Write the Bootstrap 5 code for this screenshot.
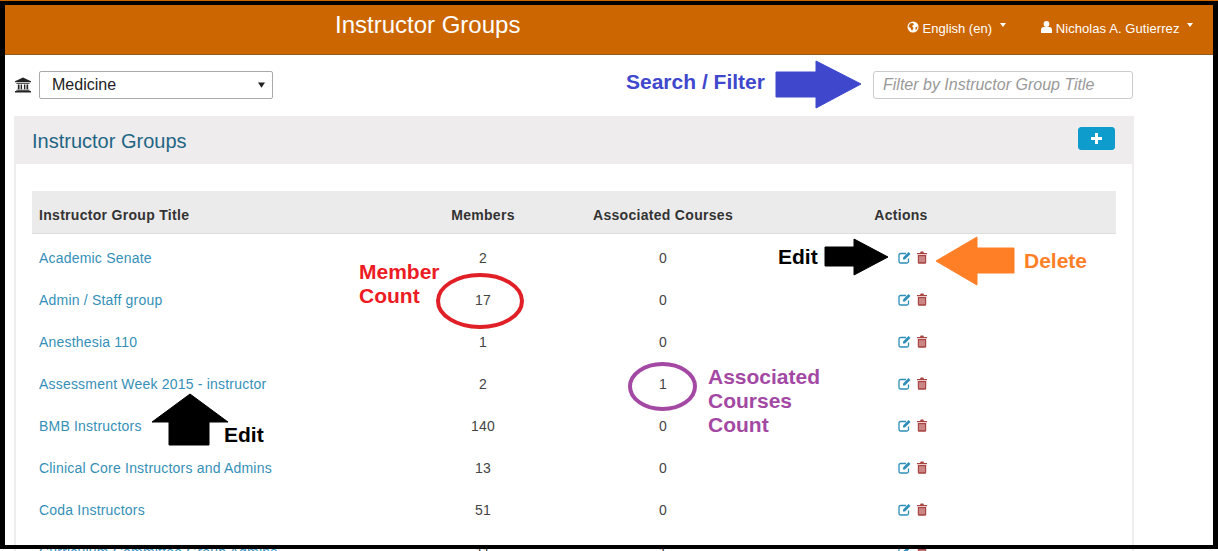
<!DOCTYPE html>
<html lang="en">
<head>
    <meta charset="UTF-8" />
    <title>Instructor Groups</title>
    <link rel="stylesheet" href="https://cdn.jsdelivr.net/npm/bootstrap@5.3.3/dist/css/bootstrap.min.css">
    <style>
        html, body { height: 551px; overflow: hidden; }
        body { font-family: "Liberation Sans", Arial, sans-serif; font-size: 14px; color: #333; background: #fff; }
        .page-wrap { position: relative; width: 1218px; height: 551px; overflow: hidden; }

        .top-bar { background: #cc6600; height: 55px; border-bottom: 1px solid #8f5a1e; padding: 5px 0 0 335px; color: #fff; }
        .top-title { font-size: 24px; line-height: 40px; margin: 0; font-weight: 400; }
        .top-menu { color: #fff; font-size: 13px; line-height: 16px; margin-top: 16px; }
        .menu-lang { width: 134px; }
        .menu-user { width: 177px; letter-spacing: .08px; }
        .mini-caret { display: inline-block; border: 3px solid transparent; border-top: 4px solid #fff; border-bottom: 0; margin-left: 8px; vertical-align: 6px; }

        .filter-row { padding: 16px 85px 0 15px; height: 61px; }
        .school-select { width: 234px; height: 28px; padding: 0 12px; font-size: 16px; line-height: 26px; color: #222; border-color: #aaa; border-radius: 2px;
            background-image: url("data:image/svg+xml,%3Csvg xmlns='http://www.w3.org/2000/svg' viewBox='0 0 8 6'%3E%3Cpath d='M0 0h8L4 6z' fill='%23222'/%3E%3C/svg%3E");
            background-size: 7px 6px; background-position: right 7px center; }
        .title-filter { width: 260px; height: 28px; padding: 0 9px; font-size: 16px; font-style: italic; border-color: #ccc; border-radius: 3px; }
        .title-filter::placeholder { color: #999; }

        .groups-card { margin-left: 14px; width: 1120px; border: 0; border-left: 2px solid #eee; border-right: 2px solid #eee; border-radius: 0; }
        .groups-head { height: 48px; background: #eeecec; border: 0; border-radius: 0 !important; margin: 0 -2px; padding: 11px 19px 0 18px; }
        .groups-title { font-size: 20px; line-height: 28px; color: #1f6685; margin: 0; font-weight: 400; }
        .add-btn { width: 37px; height: 23px; padding: 0; background: #0d9ccb; border-color: #0d9ccb; border-radius: 3px; }
        .groups-body { padding: 27px 17px 0 16px; }

        .groups-table { table-layout: fixed; width: 1084px; margin: 0; font-size: 14px; letter-spacing: .2px; }
        .groups-table th { background: #ecebeb; color: #333; font-size: 14px; height: 42px; padding: 7px 7px 0; vertical-align: middle; border-bottom: 1px solid #ddd; letter-spacing: .3px; }
        .groups-table td { height: 42px; padding: 8px 7px 0; vertical-align: middle; border: 0; color: #444; }
        .groups-table a { color: #3590b8; text-decoration: none; }
        .col-title { width: 390px; }
        .col-members { width: 122px; }
        .col-courses { width: 238px; }
        .col-actions { width: 238px; }
        .groups-table td.action-cell { padding-left: 116px; }
        .action-icons { gap: 4px; margin-top: -2px; }

        .note { position: absolute; font-weight: 700; font-size: 21px; line-height: 24px; margin: 0; }
        .note-blue { color: #3f48cc; left: 626px; top: 70px; }
        .note-red { color: #ed1c24; left: 359px; top: 260px; }
        .note-purple { color: #a349a4; left: 708px; top: 365px; }
        .note-black { color: #000; }
        .note-edit-a { left: 778px; top: 245px; }
        .note-edit-b { left: 224px; top: 423px; }
        .note-orange { color: #ff7f27; left: 1024px; top: 249px; }

        .marks { position: absolute; left: 0; top: 0; pointer-events: none; }
        .photo-frame { position: absolute; left: 0; top: 1px; width: 1218px; height: 548px; border: 5px solid #000; border-width: 4px 5px; pointer-events: none; }
    </style>
</head>

<body>
    <svg width="0" height="0" class="d-block">
        <symbol id="ico-edit" viewBox="0 0 14 13">
            <path d="M10.500 7.500v3a1.500 1.500 0 0 1-1.500 1.500H2.500A1.500 1.500 0 0 1 1 10.500V4a1.500 1.500 0 0 1 1.500-1.500H8" fill="none" stroke="#2f8fb8" stroke-width="1.300"/>
            <path d="M5 6.500 10.500 1l2 2L7 8.500H5z" fill="#2f8fb8"/>
        </symbol>
        <symbol id="ico-trash" viewBox="0 0 11 13">
            <path d="M3.500 2 4.200.5h2.600L7.500 2H10.500v1.300H.5V2zM1.300 4h8.400v7.500a1.200 1.200 0 0 1-1.200 1.200H2.500a1.200 1.200 0 0 1-1.200-1.200z" fill="#a94442"/>
            <path d="M3.500 5.200v6M5.500 5.200v6M7.500 5.200v6" stroke="#f2d9d8" stroke-width=".9"/>
        </symbol>
    </svg>

    <div class="page-wrap">
        <div class="top-bar d-flex justify-content-between">
            <h1 class="top-title">Instructor Groups</h1>
            <div class="top-menu d-flex">
                <div class="menu-lang">
                    <svg width="12" height="12" viewBox="0 0 12 12" class="align-text-top"><circle cx="6" cy="6" r="5.500" fill="#fff"/><path d="M3 2.500 6 2l1 1.500L5 5 6.500 7 5 10 3.500 7 1.500 5.500zM8.500 6.500 10.500 5.500 10 8 8.500 9z" fill="#cc6600"/></svg>
                    English (en)<span class="mini-caret"></span>
                </div>
                <div class="menu-user">
                    <svg width="11" height="12" viewBox="0 0 11 12" class="align-text-top"><circle cx="5.500" cy="3" r="2.900" fill="#fff"/><path d="M0 12V9a3 3 0 0 1 3-3h5a3 3 0 0 1 3 3v3z" fill="#fff"/></svg>
                    Nicholas A. Gutierrez<span class="mini-caret"></span>
                </div>
            </div>
        </div>

        <div class="filter-row d-flex justify-content-between align-items-start">
            <div class="d-flex align-items-center gap-2">
                <svg width="16" height="16" viewBox="0 0 17 16"><path d="M8.500 0 17 4v1H0V4z" fill="#222"/><path d="M1.500 5.800h14v1h-14zM3 7.500h1.800v5H3zM6 7.500h1.500v5H6zM9.500 7.500H11v5H9.500zM12.200 7.500H14v5h-1.800zM1.500 13h14v1h-14zM0 14.500h17V16H0z" fill="#222"/></svg>
                <select class="form-select school-select">
                    <option>Medicine</option>
                </select>
            </div>
            <input type="text" class="form-control title-filter" placeholder="Filter by Instructor Group Title">
        </div>

        <div class="card groups-card">
            <div class="card-header groups-head d-flex justify-content-between align-items-start">
                <h2 class="groups-title">Instructor Groups</h2>
                <button class="btn btn-primary add-btn d-flex align-items-center justify-content-center" type="button">
                    <svg width="11" height="11" viewBox="0 0 11 11"><path d="M4 0h3v4h4v3H7v4H4V7H0V4h4z" fill="#fff"/></svg>
                </button>
            </div>
            <div class="card-body groups-body">
                <table class="table groups-table">
                    <colgroup>
                        <col class="col-title"><col class="col-members"><col class="col-courses"><col class="col-actions"><col>
                    </colgroup>
                    <thead>
                        <tr>
                            <th>Instructor Group Title</th>
                            <th class="text-center">Members</th>
                            <th class="text-center">Associated Courses</th>
                            <th class="text-center">Actions</th>
                            <th></th>
                        </tr>
                    </thead>
                    <tbody id="groupRows"></tbody>
                </table>
            </div>
        </div>

        <svg class="marks" width="1218" height="551" viewBox="0 0 1218 551">
            <path d="M776 72h40V61l45 23-45 24V97h-40z" fill="#3f48cc" stroke="#3f48cc" stroke-linejoin="round"/>
            <path d="M825 247h29v-8l34 18-34 18v-9h-29z" fill="#000" stroke="#000" stroke-linejoin="round"/>
            <path d="M1014 248h-37v-11l-41 24 41 24v-12h37z" fill="#ff7f27" stroke="#ff7f27" stroke-linejoin="round"/>
            <path d="M190 394l38 28h-19v23h-40v-23h-17z" fill="#000" stroke="#000" stroke-linejoin="round"/>
            <ellipse cx="480" cy="301" rx="42" ry="26" fill="none" stroke="#e01f26" stroke-width="4"/>
            <ellipse cx="662.500" cy="386.500" rx="32.500" ry="22.500" fill="none" stroke="#a349a4" stroke-width="4"/>
        </svg>
        <p class="note note-blue">Search / Filter</p>
        <p class="note note-red">Member<br>Count</p>
        <p class="note note-purple">Associated<br>Courses<br>Count</p>
        <p class="note note-black note-edit-a">Edit</p>
        <p class="note note-black note-edit-b">Edit</p>
        <p class="note note-orange">Delete</p>

        <div class="photo-frame"></div>
    </div>

    <script>
        const groups = [
            ["Academic Senate", 2, 0],
            ["Admin / Staff group", 17, 0],
            ["Anesthesia 110", 1, 0],
            ["Assessment Week 2015 - instructor", 2, 1],
            ["BMB Instructors", 140, 0],
            ["Clinical Core Instructors and Admins", 13, 0],
            ["Coda Instructors", 51, 0],
            ["Curriculum Committee Group Admins", 11, 1]
        ];
        document.getElementById('groupRows').innerHTML = groups.map(g => `
            <tr>
                <td><a href="#">${g[0]}</a></td>
                <td class="text-center">${g[1]}</td>
                <td class="text-center">${g[2]}</td>
                <td class="action-cell"><div class="d-flex action-icons">
                    <svg width="14" height="13"><use href="#ico-edit"/></svg>
                    <svg width="12" height="13"><use href="#ico-trash"/></svg>
                </div></td>
                <td></td>
            </tr>`).join("");
    </script>
    <script src="https://cdn.jsdelivr.net/npm/bootstrap@5.3.3/dist/js/bootstrap.bundle.min.js"></script>
</body>

</html>
